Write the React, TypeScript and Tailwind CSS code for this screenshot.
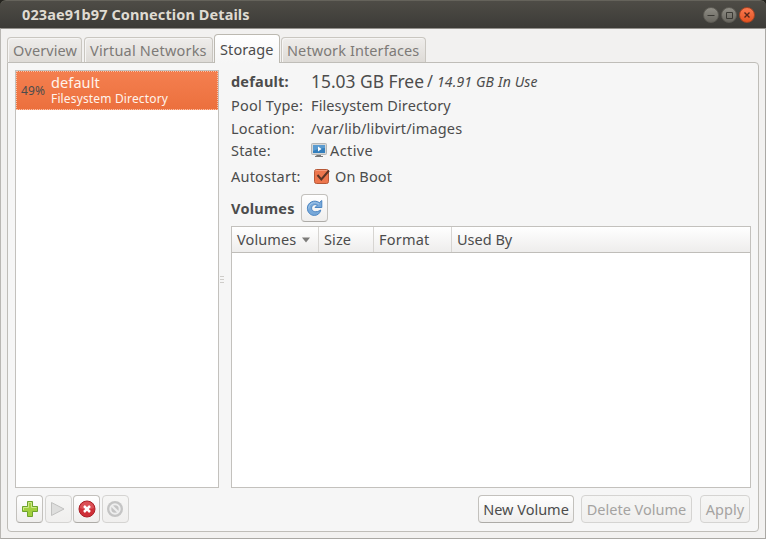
import type { ReactNode } from "react";

const cx = (...c: (string | false | undefined)[]) => c.filter(Boolean).join(" ");

function WindowButton({ close, children }: { close?: boolean; children: ReactNode }) {
  return (
    <span
      className={cx(
        "grid size-[16px] place-items-center rounded-full border bg-linear-to-b",
        close ? "border-[#a84524] from-[#f9794f] to-[#e4531f]" : "border-[#5d5b54] from-[#8f8d85] to-[#696760]"
      )}
    >
      <svg className="size-[14px]" viewBox="0 0 14 14" fill="none" stroke={close ? "#54271a" : "#3a3934"}>
        {children}
      </svg>
    </span>
  );
}

function Tab({ className, active, children }: { className: string; active?: boolean; children: ReactNode }) {
  return (
    <div
      className={cx(
        "shrink-0 rounded-t-[4px] border border-b-0 pl-[5px] whitespace-nowrap",
        active
          ? "z-10 -mb-px h-[29px] border-[#bcb9b1] bg-linear-to-b from-white to-[#f6f6f6] pt-[4px] text-[#4c4c4c]"
          : "h-[25px] border-[#c9c6c0] bg-linear-to-b from-[#efedeb] to-[#dedbd7] pt-[2px] text-[#7d7a77] shadow-[inset_1px_1px_0_#f6f5f4]",
        className
      )}
    >
      {children}
    </div>
  );
}

function Button({ className, disabled, children }: { className: string; disabled?: boolean; children: ReactNode }) {
  return (
    <button
      disabled={disabled}
      className={cx(
        "flex h-[28px] shrink-0 items-center justify-center rounded-[4px] border pb-px whitespace-nowrap",
        disabled
          ? "border-[#d5d4d2] bg-linear-to-b from-[#f6f6f5] to-[#f0efee] text-[#a5a3a1]"
          : "border-[#c3c1bd] border-b-[#adaba7] bg-linear-to-b from-white to-[#efeeed] text-[#4c4c4c]",
        className
      )}
    >
      {children}
    </button>
  );
}

function Row({ label, className, children }: { label: ReactNode; className: string; children: ReactNode }) {
  return (
    <div className={cx("flex shrink-0 items-center whitespace-nowrap", className)}>
      <div className="w-[80px] shrink-0 tracking-[0.2px]">{label}</div>
      {children}
    </div>
  );
}

export default function App() {
  return (
    <div className="h-[539px] w-[766px] overflow-hidden bg-[#25241f] font-['Noto_Sans','Open_Sans',sans-serif] text-[14.5px] leading-[20px] tracking-[0.1px] text-[#4c4c4c]">
      <header className="flex h-[28px] items-center rounded-t-[6px] border-t border-[#65635b] bg-linear-to-b from-[#4e4c46] to-[#3c3b37] pr-[11px] pl-[22px]">
        <h1 className="flex-1 pb-[2px] font-bold whitespace-nowrap text-[#dfdbd2]">023ae91b97 Connection Details</h1>
        <div className="flex gap-[2px]">
          <WindowButton>
            <path d="M3.5 7.5h7" />
          </WindowButton>
          <WindowButton>
            <path d="M4.5 4.5h6v6h-6z" />
          </WindowButton>
          <WindowButton close>
            <path d="M4.5 4.5l5 5M9.5 4.5l-5 5" strokeWidth="1.4" />
          </WindowButton>
        </div>
      </header>

      <main className="flex h-[511px] flex-col border border-t-[#93918c] border-r-[#aaa8a4] border-b-[#aaa8a4] border-l-[#b9b7b3] bg-[#f2f1f0] px-[6px] pt-[5px] pb-[6px]">
        <nav className="flex h-[28px] shrink-0 items-end">
          <Tab className="w-[75px]">Overview</Tab>
          <Tab className="ml-[2px] w-[129px] tracking-[0.2px]">Virtual Networks</Tab>
          <Tab active className="ml-px w-[66px]">Storage</Tab>
          <Tab className="ml-px w-[145px]">Network Interfaces</Tab>
        </nav>

        <section className="flex min-h-0 flex-1 rounded-b-[4px] rounded-tr-[4px] border border-[#bfbdb8] bg-[#f6f6f6] pt-[7px] pr-[7px] pb-[8px] pl-[7px]">
          <aside className="flex w-[204px] shrink-0 flex-col">
            <div className="h-[418px] shrink-0 border border-[#c3c1bd] bg-white">
              <div className="flex h-[39px] items-center border border-dotted border-[#f9c3ab] bg-linear-to-b from-[#f47f4f] to-[#ec703d] pl-[4px] whitespace-nowrap">
                <span className="w-[30px] text-[12px]">49%</span>
                <div className="text-[#fff3ec]">
                  <div className="leading-[16px]">default</div>
                  <div className="text-[12px] leading-[17px] tracking-[0.15px]">Filesystem Directory</div>
                </div>
              </div>
            </div>
            <div className="mt-[7px] flex gap-[1.6px] pl-px">
              <Button className="w-[27px]">
                <svg className="size-[18px] shrink-0" viewBox="0 0 18 18">
                  <path d="M6.5 1.5h5v5h5v5h-5v5h-5v-5h-5v-5h5z" fill="#a2cf3e" stroke="#6da32c" strokeLinejoin="round" />
                  <path d="M7.5 2.5h3v5h5M2.5 10V7.5h5v-5" fill="none" stroke="#cfe98b" />
                </svg>
              </Button>
              <Button disabled className="w-[27px]">
                <svg className="size-[18px] shrink-0" viewBox="0 0 18 18">
                  <path d="M2.5 2.5v13L15 9z" fill="#dededd" stroke="#c1c1c0" strokeLinejoin="round" />
                </svg>
              </Button>
              <Button className="w-[27px]">
                <svg className="size-[18px] shrink-0" viewBox="0 0 18 18">
                  <circle cx="9" cy="9" r="8" fill="#cf2f38" stroke="#aa2028" />
                  <path d="M2 8a7 6.5 0 0 1 14 0q-7 3-14 0" fill="#e66b70" opacity=".55" />
                  <path d="M6 6l6 6M12 6l-6 6" stroke="white" strokeWidth="2.5" />
                </svg>
              </Button>
              <Button disabled className="w-[27px]">
                <svg className="size-[18px] shrink-0" viewBox="0 0 18 18">
                  <circle cx="9" cy="9" r="8" fill="#c4c4c4" />
                  <circle cx="9" cy="9" r="4.7" fill="#c4c4c4" stroke="#eeeeee" strokeWidth="2" />
                  <path d="M5.7 5.7l6.6 6.6" stroke="#eeeeee" strokeWidth="2.2" />
                </svg>
              </Button>
            </div>
          </aside>

          <div className="flex w-[12px] shrink-0 flex-col items-center gap-[2px] pt-[206px]">
            <i className="ml-[-7px] h-px w-[4px] bg-[#cfcdca]" />
            <i className="ml-[-7px] h-px w-[4px] bg-[#cfcdca]" />
            <i className="ml-[-7px] h-px w-[4px] bg-[#cfcdca]" />
          </div>

          <div className="flex min-w-0 flex-1 flex-col">
            <Row className="h-[22px]" label={<b>default:</b>}>
              <span className="text-[17.4px] tracking-normal">15.03 GB Free</span>
              <span className="ml-[3px] text-[16px]">/</span>
              <span className="ml-[4px] pt-px text-[14px] tracking-[0.15px] italic">14.91 GB In Use</span>
            </Row>
            <Row className="h-[25px]" label="Pool Type:">Filesystem Directory</Row>
            <Row className="h-[22px]" label="Location:">
              <span className="tracking-[0.17px]">/var/lib/libvirt/images</span>
            </Row>
            <Row className="h-[22px]" label="State:">
              <svg className="mr-[3px] h-[16px] w-[16px]" viewBox="0 0 16 16">
                <rect x=".5" y="1.5" width="15" height="11" rx="1" fill="#d6d8d8" stroke="#b3b5b5" />
                <rect x="2" y="3" width="12" height="8" fill="#347fbd" />
                <path d="M2 3h12v3Q8 6 2 9z" fill="#5a9bd0" />
                <path d="M7 4.5v5L10.5 7z" fill="white" />
                <path d="M6 13h4v1.5H4.5V14z" fill="#777" />
                <path d="M4 14.5h8" stroke="#777" />
              </svg>
              <span className="tracking-[0.4px]">Active</span>
            </Row>
            <Row className="h-[29px]" label="Autostart:">
              <svg className="mr-[5px] ml-[2px] h-[18px] w-[17px]" viewBox="0 0 17 18">
                <rect x="1.5" y="2.5" width="14" height="14" rx="2" fill="#ed764d" stroke="#b65837" />
                <path d="M2.5 3.5h12" stroke="#f59b7b" />
                <path d="M4.5 8l3.8 4.5L16 3.5" fill="none" stroke="#5a3426" strokeWidth="2" />
              </svg>
              On Boot
            </Row>
            <div className="flex h-[36px] shrink-0 items-center">
              <b className="w-[70px] tracking-[0.25px]">Volumes</b>
              <Button className="w-[27px]">
                <svg className="size-[18px] shrink-0" viewBox="0 0 18 18">
                  <path
                    d="M15.8 1.5V8.5H9L11.3 6.2C8.5 4.6 5.6 6.4 5.6 9.2C5.6 12.6 10 14.2 14.8 11C14 14.4 11.6 16.4 8.4 16.4C4.4 16.4 1.4 13.4 1.4 9.2C1.4 3.4 8 .1 13.4 3.6Z"
                    fill="#77a8d9"
                    stroke="#4b85c2"
                    strokeLinejoin="round"
                  />
                  <path d="M2.8 9.5C2.6 4.8 8.2 1.8 13 5" fill="none" stroke="#a5c8ea" />
                </svg>
              </Button>
            </div>

            <div className="h-[262px] shrink-0 border border-[#c3c1bd] bg-white">
              <div className="flex h-[26px] border-b border-[#bfbdb9] bg-linear-to-b from-white to-[#eeedec] leading-[25px] whitespace-nowrap">
                <div className="flex w-[87px] items-center border-r border-[#d7d5d2] pl-[5px]">
                  <span className="w-[65px]">Volumes</span>
                  <svg className="h-[6px] w-[8px]" viewBox="0 0 8 6">
                    <path d="M0 .5h8L4 5.5z" fill="#7c7b79" />
                  </svg>
                </div>
                <div className="w-[55px] border-r border-[#d7d5d2] pl-[5px]">Size</div>
                <div className="w-[78px] border-r border-[#d7d5d2] pl-[5px] tracking-[0.2px]">Format</div>
                <div className="pl-[5px] tracking-normal">Used By</div>
              </div>
            </div>

            <div className="mt-[7px] flex justify-end pr-px">
              <Button className="w-[96px] tracking-normal">New Volume</Button>
              <Button disabled className="ml-[7px] w-[111px] tracking-normal">Delete Volume</Button>
              <Button disabled className="ml-[8px] w-[50px]">Apply</Button>
            </div>
          </div>
        </section>
      </main>
    </div>
  );
}
